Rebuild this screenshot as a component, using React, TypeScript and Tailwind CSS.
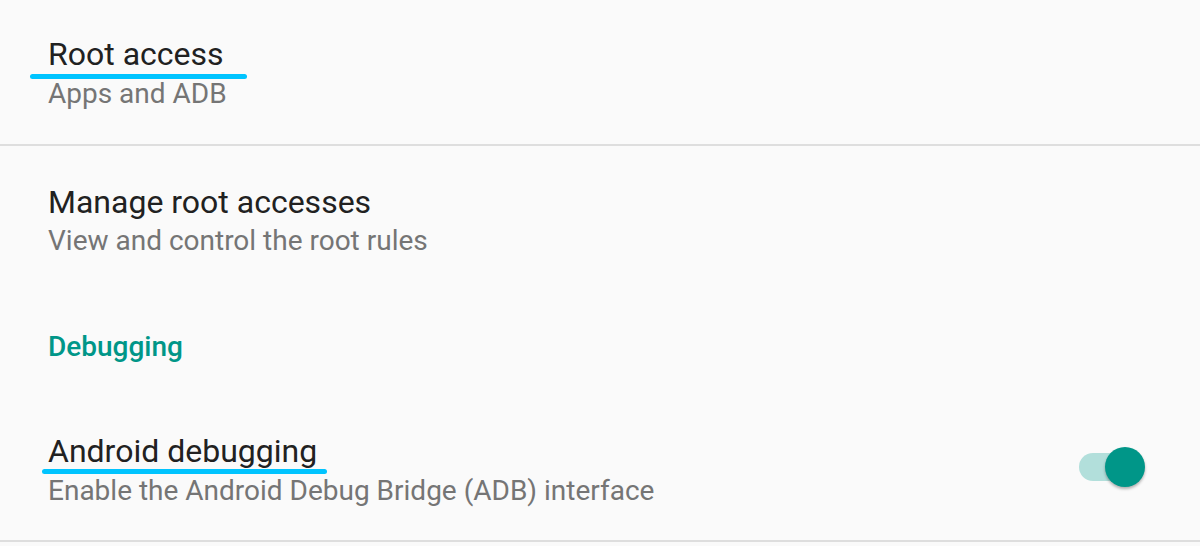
import React from "react";

function Marker({ className }: { className: string }) {
  return <span className={`absolute h-[5px] rounded-full bg-[#00c4ff] ${className}`} />;
}

export default function App() {
  return (
    <div className="w-[1200px] h-[546px] overflow-hidden bg-[#fafafa] font-['Roboto',sans-serif]">
      {/* Root access */}
      <div className="h-[144px] pl-[48px] pt-[34px]">
        <div className="relative text-[32px] leading-[40px] text-[#212121]">
          Root access
          <Marker className="left-[-18px] top-[40px] w-[217px]" />
        </div>
        <div className="mt-[2px] text-[28px] leading-[36px] text-[#757575]">Apps and ADB</div>
      </div>
      <div className="h-[2px] bg-[#dedede]" />

      {/* Manage root accesses */}
      <div className="pl-[48px] pt-[36px]">
        <div className="text-[32px] leading-[40px] text-[#212121]">Manage root accesses</div>
        <div className="mt-[1px] text-[28px] leading-[36px] text-[#757575]">
          View and control the root rules
        </div>
      </div>

      {/* Debugging category */}
      <div className="pl-[48px] pt-[70px] text-[28px] leading-[36px] font-medium text-[#009688]">
        Debugging
      </div>

      {/* Android debugging */}
      <div className="flex h-[175px] items-start justify-between pl-[48px] pr-[55px] pt-[66px]">
        <div>
          <div className="relative text-[32px] leading-[40px] text-[#212121]">
            Android debugging
            <Marker className="left-[-6px] top-[38px] w-[285px]" />
          </div>
          <div className="mt-[2px] text-[28px] leading-[36px] text-[#757575]">
            Enable the Android Debug Bridge (ADB) interface
          </div>
        </div>
        <div className="relative mt-[16px] flex h-[40px] w-[66px] items-center">
          <div className="h-[28px] w-[64px] rounded-full bg-[#b2dfdb]" />
          <div className="absolute right-0 top-0 h-[40px] w-[40px] rounded-full bg-[#009688] shadow-[0_2px_3px_rgba(0,0,0,0.3)]" />
        </div>
      </div>
      <div className="h-[2px] bg-[#dedede]" />
    </div>
  );
}
